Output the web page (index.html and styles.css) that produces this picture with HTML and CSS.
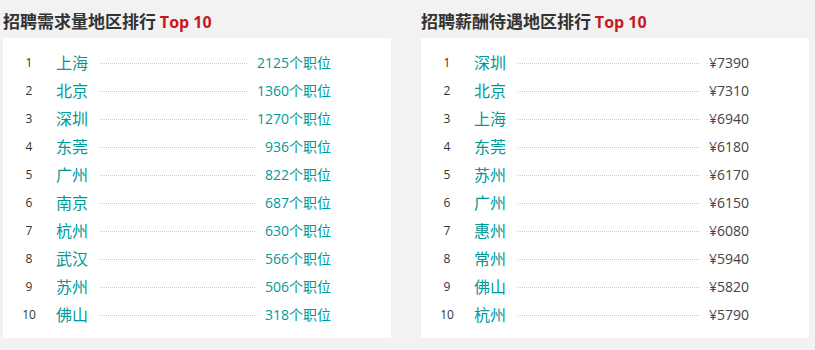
FILE: index.html
```html
<!DOCTYPE html>
<html lang="zh">
<head>
<meta charset="utf-8">
<link rel="stylesheet" href="styles.css">
</head>
<body>
<div class="page">
  <section class="panel">
    <h2 class="title">招聘需求量地区排行 <span class="top">Top 10</span></h2>
    <ol class="box">
      <li class="row"><span class="no">1</span><span class="city">上海</span><span class="dots"></span><span class="val teal">2125个职位</span></li>
      <li class="row"><span class="no">2</span><span class="city">北京</span><span class="dots"></span><span class="val teal">1360个职位</span></li>
      <li class="row"><span class="no">3</span><span class="city">深圳</span><span class="dots"></span><span class="val teal">1270个职位</span></li>
      <li class="row"><span class="no">4</span><span class="city">东莞</span><span class="dots"></span><span class="val teal">936个职位</span></li>
      <li class="row"><span class="no">5</span><span class="city">广州</span><span class="dots"></span><span class="val teal">822个职位</span></li>
      <li class="row"><span class="no">6</span><span class="city">南京</span><span class="dots"></span><span class="val teal">687个职位</span></li>
      <li class="row"><span class="no">7</span><span class="city">杭州</span><span class="dots"></span><span class="val teal">630个职位</span></li>
      <li class="row"><span class="no">8</span><span class="city">武汉</span><span class="dots"></span><span class="val teal">566个职位</span></li>
      <li class="row"><span class="no">9</span><span class="city">苏州</span><span class="dots"></span><span class="val teal">506个职位</span></li>
      <li class="row"><span class="no">10</span><span class="city">佛山</span><span class="dots"></span><span class="val teal">318个职位</span></li>
    </ol>
  </section>
  <section class="panel">
    <h2 class="title">招聘薪酬待遇地区排行 <span class="top">Top 10</span></h2>
    <ol class="box">
      <li class="row"><span class="no">1</span><span class="city">深圳</span><span class="dots"></span><span class="val">¥7390</span></li>
      <li class="row"><span class="no">2</span><span class="city">北京</span><span class="dots"></span><span class="val">¥7310</span></li>
      <li class="row"><span class="no">3</span><span class="city">上海</span><span class="dots"></span><span class="val">¥6940</span></li>
      <li class="row"><span class="no">4</span><span class="city">东莞</span><span class="dots"></span><span class="val">¥6180</span></li>
      <li class="row"><span class="no">5</span><span class="city">苏州</span><span class="dots"></span><span class="val">¥6170</span></li>
      <li class="row"><span class="no">6</span><span class="city">广州</span><span class="dots"></span><span class="val">¥6150</span></li>
      <li class="row"><span class="no">7</span><span class="city">惠州</span><span class="dots"></span><span class="val">¥6080</span></li>
      <li class="row"><span class="no">8</span><span class="city">常州</span><span class="dots"></span><span class="val">¥5940</span></li>
      <li class="row"><span class="no">9</span><span class="city">佛山</span><span class="dots"></span><span class="val">¥5820</span></li>
      <li class="row"><span class="no">10</span><span class="city">杭州</span><span class="dots"></span><span class="val">¥5790</span></li>
    </ol>
  </section>
</div>
</body>
</html>
```
FILE: styles.css
```css
html, body {
  margin: 0;
  padding: 0;
  background: #f2f2f2;
}
body {
  font-family: "Open Sans", "Noto Sans CJK SC", sans-serif;
  color: #333;
}
.page {
  display: flex;
  gap: 30px;
  padding: 0 0 0 3px;
}
.panel {
  width: 388px;
}
.title {
  margin: 0;
  height: 38px;
  line-height: 42px;
  font-size: 17px;
  font-weight: bold;
  color: #333;
  font-family: "Noto Sans CJK SC", sans-serif;
  white-space: nowrap;
}
.top {
  font-family: "Open Sans", sans-serif;
  font-size: 16px;
  color: #c8171e;
  font-weight: bold;
}
.box {
  list-style: none;
  margin: 0;
  padding: 10px 60px 10px 14px;
  background: #fff;
  height: 280px;
}
.row {
  display: flex;
  align-items: center;
  height: 28px;
}
.no {
  width: 24px;
  text-align: center;
  font-size: 12px;
  color: #333;
  margin-right: 15px;
}
.city {
  font-family: "Noto Sans CJK SC", sans-serif;
  font-size: 16px;
  color: #009999;
  line-height: 28px;
}
.dots {
  flex: 1;
  border-top: 1px dotted #c8c8c8;
  margin: 2px 10px 0 12px;
}
.val {
  font-size: 14px;
  color: #444;
  white-space: nowrap;
}
.val.teal {
  color: #009999;
}
```
